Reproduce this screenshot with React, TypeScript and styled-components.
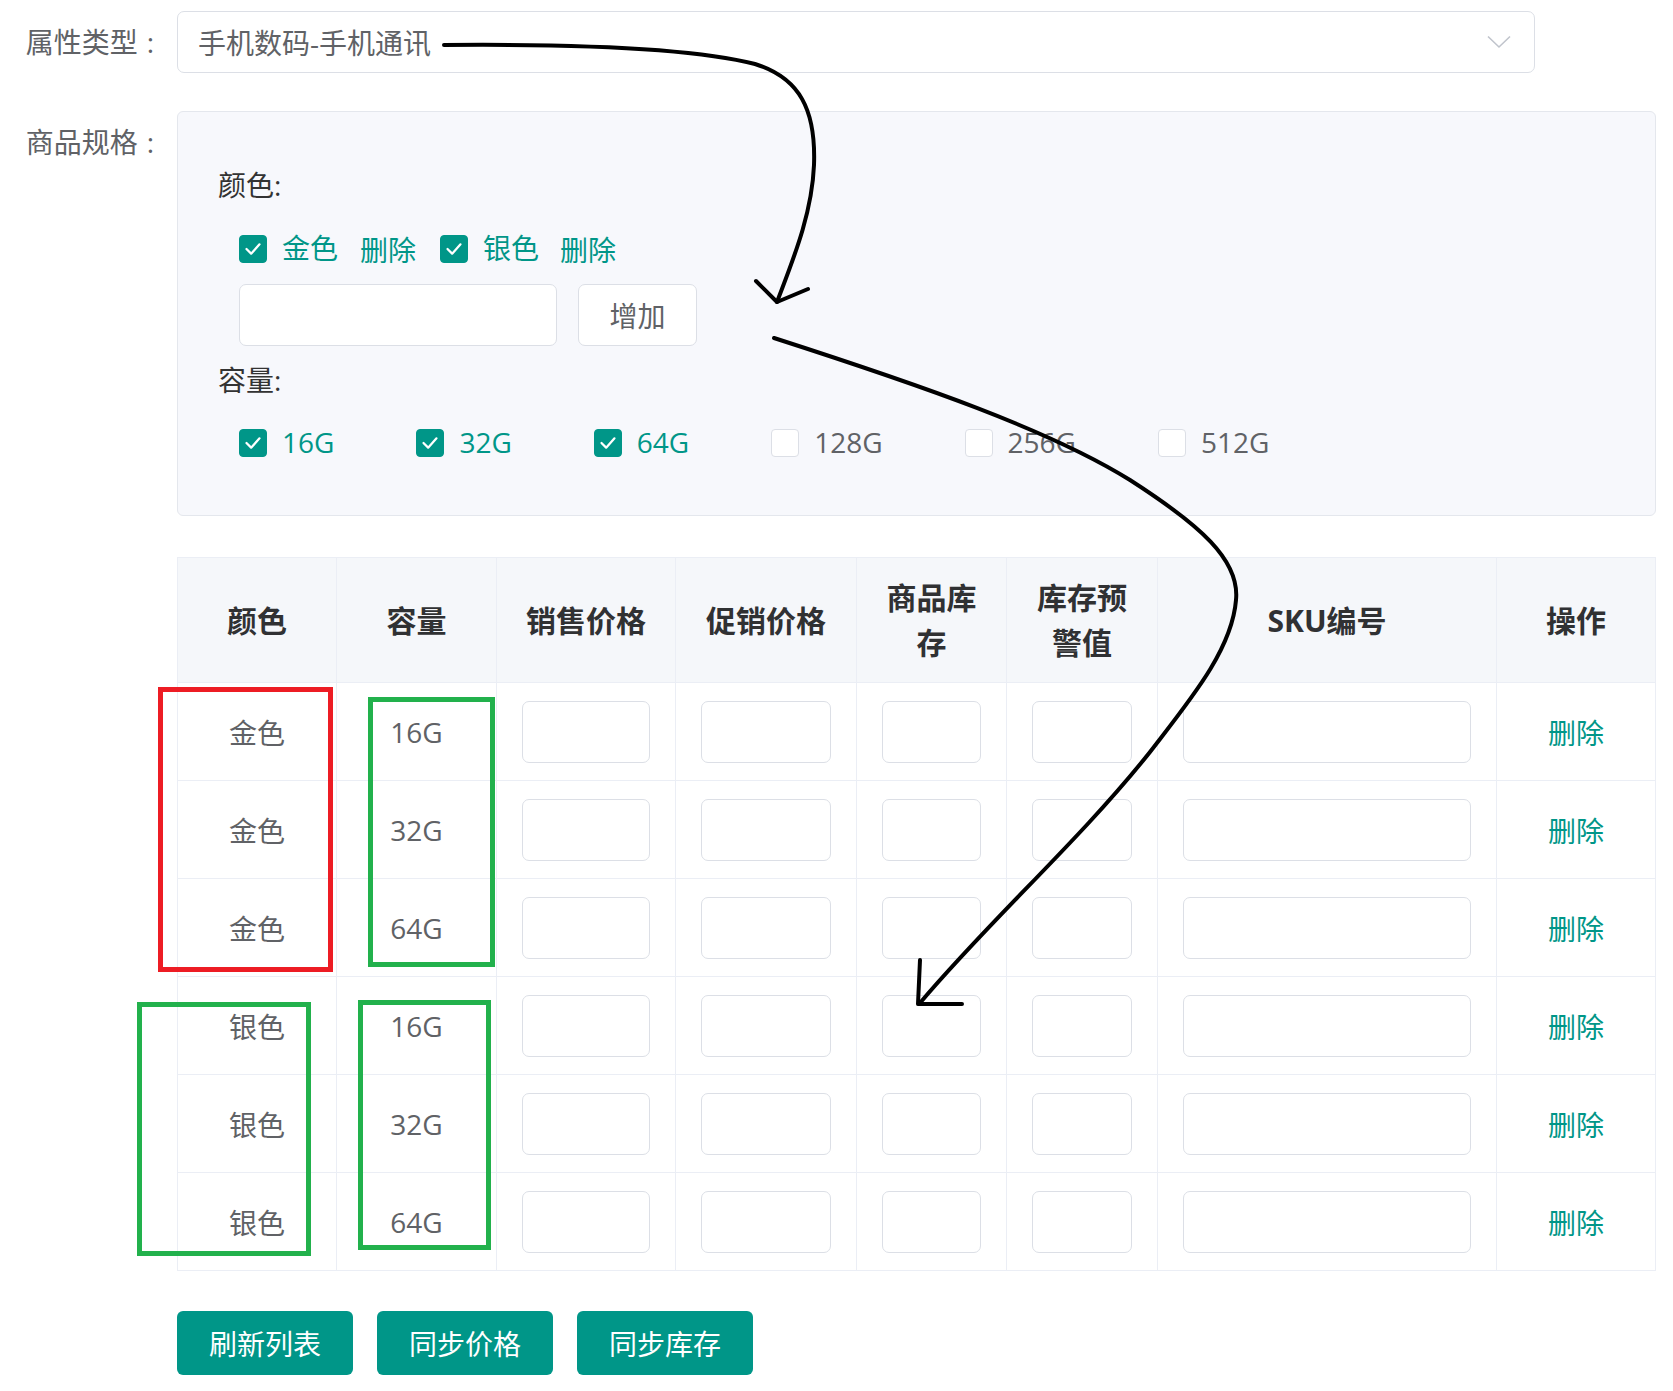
import React from "react";
import styled, { createGlobalStyle } from "styled-components";

const TEAL = "#009688";
const TEXT = "#606266";
const LINE = "#ebeef5";

const GlobalStyle = createGlobalStyle`
  html, body { margin: 0; padding: 0; background: #ffffff; }
  body { font-family: "Open Sans", "Noto Sans CJK SC", "Noto Sans", sans-serif; color: ${TEXT}; }
  *, *::before, *::after { box-sizing: border-box; }
  button, input { font-family: inherit; }
`;

const Page = styled.div`
  position: relative;
  width: 1673px;
  height: 1391px;
  padding-top: 11px;
  font-size: 28px;
  overflow: hidden;
`;

const FormItem = styled.div<{ $mb: number }>`
  display: flex;
  align-items: flex-start;
  margin-bottom: ${(p) => p.$mb}px;
`;

const FormLabel = styled.label`
  flex: none;
  width: 177px;
  padding-right: 23px;
  text-align: right;
  line-height: 62px;
  font-size: 28px;
  color: ${TEXT};
  white-space: nowrap;
`;

const Colon = styled.span`
  margin-left: 9px;
`;

const Indented = styled.div`
  margin-left: 177px;
`;

const Select = styled.div`
  width: 1358px;
  height: 62px;
  border: 1px solid #dcdfe6;
  border-radius: 7px;
  background: #fff;
  display: flex;
  align-items: center;
  justify-content: space-between;
  padding: 0 23px 0 20px;
  font-size: 28px;
  color: ${TEXT};
`;

const SpecBox = styled.div`
  width: 1479px;
  background: #f7f8fc;
  border: 1px solid #e4e7ed;
  border-radius: 6px;
  padding: 52px 40px 51px 40px;
`;

const SpecTitle = styled.div<{ $mt?: number }>`
  font-size: 28px;
  line-height: 43px;
  color: #333333;
  margin-top: ${(p) => p.$mt ?? 0}px;
`;

const OptionRow = styled.div<{ $mt: number; $h?: number }>`
  display: flex;
  align-items: center;
  height: ${(p) => p.$h ?? 43}px;
  margin-top: ${(p) => p.$mt}px;
  padding-left: 21px;
`;

const CheckLabel = styled.label<{ $checked: boolean; $mr: number }>`
  display: inline-flex;
  align-items: center;
  gap: 15px;
  margin-right: ${(p) => p.$mr}px;
  font-size: 28px;
  line-height: 43px;
  color: ${(p) => (p.$checked ? TEAL : TEXT)};
  white-space: nowrap;
`;

const Box = styled.span<{ $checked: boolean }>`
  flex: none;
  width: 28px;
  height: 28px;
  border-radius: 4px;
  border: 1px solid ${(p) => (p.$checked ? TEAL : "#dcdfe6")};
  background: ${(p) => (p.$checked ? TEAL : "#ffffff")};
  display: inline-flex;
  align-items: center;
  justify-content: center;
`;

const LinkText = styled.span<{ $mr?: number }>`
  color: ${TEAL};
  font-size: 28px;
  margin-right: ${(p) => p.$mr ?? 0}px;
  white-space: nowrap;
`;

const TextInput = styled.input<{ $w?: number }>`
  display: block;
  width: ${(p) => (p.$w ? `${p.$w}px` : "100%")};
  height: 62px;
  border: 1px solid #dcdfe6;
  border-radius: 7px;
  background: #ffffff;
  outline: none;
  padding: 0 16px;
  font-size: 28px;
  color: ${TEXT};
`;

const PlainButton = styled.button`
  width: 119px;
  height: 62px;
  margin-left: 21px;
  border: 1px solid #dcdfe6;
  border-radius: 7px;
  background: #ffffff;
  color: ${TEXT};
  font-size: 28px;
  padding: 0;
`;

const Table = styled.div`
  display: grid;
  grid-template-columns: 159px 160px 179px 181px 150px 151px 339px 159px;
  width: 1479px;
  margin-top: 41px;
  border-top: 1px solid ${LINE};
  border-left: 1px solid ${LINE};
`;

const HeadCell = styled.div`
  height: 125px;
  background: #f5f7fa;
  border-right: 1px solid ${LINE};
  border-bottom: 1px solid ${LINE};
  display: flex;
  align-items: center;
  justify-content: center;
  text-align: center;
  padding: 0 20px;
  font-size: 30px;
  font-weight: 700;
  line-height: 45px;
  color: #303133;
`;

const Cell = styled.div`
  height: 98px;
  border-right: 1px solid ${LINE};
  border-bottom: 1px solid ${LINE};
  display: flex;
  align-items: center;
  justify-content: center;
  padding: 0 25px;
  font-size: 28px;
  color: ${TEXT};
`;

const ActionBar = styled.div`
  display: flex;
  gap: 24px;
  margin-top: 40px;
`;

const PrimaryButton = styled.button`
  width: 176px;
  height: 64px;
  border: none;
  border-radius: 6px;
  background: ${TEAL};
  color: #ffffff;
  font-size: 28px;
  padding: 0;
`;

const Overlay = styled.svg`
  position: absolute;
  left: 0;
  top: 0;
  pointer-events: none;
`;

const Check = () => (
  <svg width="28" height="28" viewBox="0 0 28 28">
    <polyline points="7,14 12,19 21,9" fill="none" stroke="#fff" strokeWidth="2.4" strokeLinecap="round" strokeLinejoin="round" />
  </svg>
);

const CheckItem: React.FC<{ checked: boolean; label: string; mr: number }> = ({ checked, label, mr }) => (
  <CheckLabel $checked={checked} $mr={mr}>
    <Box $checked={checked}>{checked && <Check />}</Box>
    <span>{label}</span>
  </CheckLabel>
);

const capacities = [
  { label: "16G", checked: true },
  { label: "32G", checked: true },
  { label: "64G", checked: true },
  { label: "128G", checked: false },
  { label: "256G", checked: false },
  { label: "512G", checked: false },
];

const headers = ["颜色", "容量", "销售价格", "促销价格", "商品库存", "库存预警值", "SKU编号", "操作"];

const rows = [
  ["金色", "16G"],
  ["金色", "32G"],
  ["金色", "64G"],
  ["银色", "16G"],
  ["银色", "32G"],
  ["银色", "64G"],
];

export default function App() {
  return (
    <>
      <GlobalStyle />
      <Page>
        <FormItem $mb={38}>
          <FormLabel>
            属性类型<Colon>:</Colon>
          </FormLabel>
          <Select>
            <span>手机数码-手机通讯</span>
            <svg width="24" height="14" viewBox="0 0 24 14">
              <polyline points="1,1.5 12,12 23,1.5" fill="none" stroke="#c0c4cc" strokeWidth="1.6" />
            </svg>
          </Select>
        </FormItem>

        <FormItem $mb={0}>
          <FormLabel>
            商品规格<Colon>:</Colon>
          </FormLabel>
          <SpecBox>
            <SpecTitle>颜色:</SpecTitle>
            <OptionRow $mt={20}>
              <CheckItem checked label="金色" mr={22} />
              <LinkText $mr={24}>删除</LinkText>
              <CheckItem checked label="银色" mr={21} />
              <LinkText>删除</LinkText>
            </OptionRow>
            <OptionRow $mt={14} $h={62}>
              <TextInput $w={318} />
              <PlainButton>增加</PlainButton>
            </OptionRow>
            <SpecTitle $mt={13}>容量:</SpecTitle>
            <OptionRow $mt={19}>
              {capacities.map((c) => (
                <CheckItem key={c.label} checked={c.checked} label={c.label} mr={82} />
              ))}
            </OptionRow>
          </SpecBox>
        </FormItem>

        <Indented>
          <Table>
            {headers.map((h) => (
              <HeadCell key={h}>{h}</HeadCell>
            ))}
            {rows.map(([color, cap], i) => (
              <React.Fragment key={i}>
                <Cell>{color}</Cell>
                <Cell>{cap}</Cell>
                <Cell><TextInput /></Cell>
                <Cell><TextInput /></Cell>
                <Cell><TextInput /></Cell>
                <Cell><TextInput /></Cell>
                <Cell><TextInput /></Cell>
                <Cell><LinkText>删除</LinkText></Cell>
              </React.Fragment>
            ))}
          </Table>

          <ActionBar>
            <PrimaryButton>刷新列表</PrimaryButton>
            <PrimaryButton>同步价格</PrimaryButton>
            <PrimaryButton>同步库存</PrimaryButton>
          </ActionBar>
        </Indented>

        <Overlay width="1673" height="1391" viewBox="0 0 1673 1391">
          <g fill="none" stroke="#000" strokeWidth="4" strokeLinecap="round" strokeLinejoin="round">
            <path d="M444 45 C 560 44, 690 47, 755 64 C 800 78, 816 110, 814 165 C 812 215, 792 262, 777 302" />
            <path d="M756 281 L777 302 L808 289" />
            <path d="M774 338 C 920 385, 1050 430, 1130 480 C 1200 525, 1240 560, 1236 600 C 1232 650, 1190 700, 1150 752 C 1080 840, 990 920, 920 1003" />
            <path d="M920 960 L918 1004 L962 1004" />
          </g>
          <g fill="none" strokeWidth="5">
            <rect x="160.5" y="689.5" width="170" height="280" stroke="#ed1c24" />
            <rect x="370.5" y="699.5" width="122" height="265" stroke="#22b14c" />
            <rect x="139.5" y="1004.5" width="169" height="249" stroke="#22b14c" />
            <rect x="360.5" y="1002.5" width="128" height="245" stroke="#22b14c" />
          </g>
        </Overlay>
      </Page>
    </>
  );
}
